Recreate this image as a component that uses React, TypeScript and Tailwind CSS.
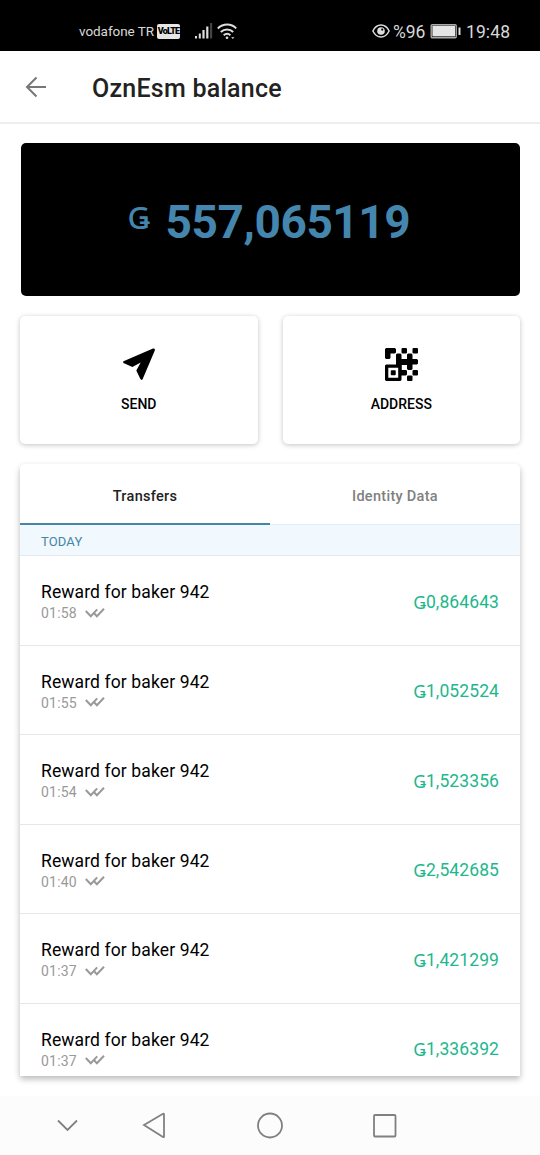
import React from "react";

const rows = [
  ["01:58", "0,864643"],
  ["01:55", "1,052524"],
  ["01:54", "1,523356"],
  ["01:40", "2,542685"],
  ["01:37", "1,421299"],
  ["01:37", "1,336392"],
];

function StatusBar() {
  return (
    <div className="flex h-[51px] shrink-0 items-center bg-black pt-[11px] pr-[29px] pl-[79px] text-[#d8d8d8]">
      <span className="w-[78px] text-[13.5px] leading-5 tracking-[-0.05px] whitespace-nowrap">vodafone TR</span>
      <span className="flex h-[15px] w-[23px] items-center justify-center rounded-[2px] bg-[#e6e6e6] text-[9px] leading-[15px] font-black tracking-[-0.8px] text-black"><span className="mt-px">VoLTE</span></span>
      <svg className="ml-[15px]" width="19" height="17" viewBox="0 0 19 17" fill="#dedede">
        <rect x="0" y="13" width="2" height="2.5" />
        <rect x="3.8" y="10.5" width="2" height="5" />
        <rect x="7.4" y="7" width="2.2" height="8.5" />
        <rect x="11.2" y="3.5" width="2.2" height="12" />
        <rect x="15" y="0" width="2.2" height="15.5" fill="#444" />
      </svg>
      <svg className="ml-[3px]" width="21" height="17" viewBox="0 0 21 17" fill="none" stroke="#dedede" strokeWidth="2">
        <path d="M.8 5.4C6.2.3 14.3.3 19.2 5.4M3.8 9c3.5-3.5 9-3.5 12.4 0M6.7 12.3c2-1.8 4.8-1.8 6.7 0" />
        <circle cx="10" cy="14.7" r="1.3" fill="#dedede" stroke="none" />
        <path d="m14.2 14.2 1.6 1.8 1.6-1.8z" fill="#dedede" stroke="none" />
      </svg>
      <svg className="ml-auto" width="18" height="14" viewBox="0 0 18 14" fill="none" stroke="#dedede" strokeWidth="1.5">
        <path d="M.9 7C4.8-.9 13.2-.9 17.1 7 13.2 14.9 4.8 14.9.9 7Z" />
        <circle cx="9" cy="7" r="3.8" fill="#dedede" stroke="none" />
        <circle cx="10.2" cy="5.6" r="1.1" fill="black" stroke="none" />
      </svg>
      <span className="mt-[2px] ml-[3px] w-[37px] text-[17.5px] leading-5 tracking-[-0.1px]">%96</span>
      <svg width="32" height="16" viewBox="0 0 32 16" fill="none">
        <rect x="1.2" y="1.7" width="25" height="13" rx="1" stroke="#aaaaaa" strokeWidth="1.4" />
        <rect x="2.4" y="2.8" width="22.6" height="10.6" fill="#e5e5e5" />
        <rect x="28.5" y="4.5" width="2" height="7.5" fill="#dedede" />
      </svg>
      <span className="mt-[2px] ml-[4px] w-[45px] text-[17.5px] leading-5 tracking-[0.1px] whitespace-nowrap">19:48</span>
    </div>
  );
}

function QrIcon() {
  return (
    <svg width="33" height="33" viewBox="0 0 12 12" fill="black">
      <path fillRule="evenodd" d="M.4 0H3.6L4 .4V1.6L3.6 2H2V3.6L1.6 4H.4L0 3.6V.4ZM4 2.4 4.4 2H5.6L6 2.4V4H8V2.4L8.4 2H9.6L10 2.4V4H11.6L12 4.4V5.6L11.6 6H10V7.6L9.6 8H8.4L8 7.6V6.2H6.1V8H7.7L8 8.4V9.6L7.6 10H6V11.6L5.6 12H.4L0 11.6V6.4L.4 6H4ZM1.2 7.2V10.8H4.8V7.2Z" />
      <rect x="6" y="0" width="2" height="2" rx=".4" />
      <rect x="10" y="0" width="2" height="2" rx=".4" />
      <rect x="2.1" y="8.1" width="1.8" height="1.8" rx=".3" />
      <rect x="10" y="8" width="2" height="2" rx=".4" />
      <rect x="8" y="10" width="2" height="2" rx=".4" />
    </svg>
  );
}

function DoubleCheck() {
  return (
    <svg className="mb-[2px] ml-[8px]" width="20" height="10" viewBox="0 0 20 10" fill="none" stroke="#999" strokeWidth="2">
      <path d="m.8 3 5 5.2 6.4-6.8M8.6 4.8l3.3 3.4L19 .8" />
    </svg>
  );
}

export default function App() {
  return (
    <div className="flex h-[1155px] w-[540px] flex-col overflow-hidden bg-white font-[Roboto,sans-serif]">
      <StatusBar />
      <header className="flex h-[73px] shrink-0 items-center border-b-2 border-[#eeeeee] bg-white pl-[25px]">
        <svg width="22" height="22" viewBox="0 0 22 22" fill="none" stroke="#777" strokeWidth="2">
          <path d="M21 11H2M11.5 1.5 2 11l9.5 9.5" />
        </svg>
        <h1 className="mt-[4px] ml-[45px] text-[25px] leading-8 font-medium tracking-[0.25px] text-[#222]">OznEsm balance</h1>
      </header>
      <main className="flex min-h-0 flex-1 flex-col px-[20px] pt-[19px]">
        <section className="mr-[0.5px] ml-[0.5px] flex h-[153px] shrink-0 items-center rounded-[5px] bg-black pl-[107px] text-[#4486ad]">
          <span className="mb-[6px] w-[38px] font-['Noto_Sans',sans-serif] text-[31px] leading-8 font-medium">Ǥ</span>
          <span className="mt-[5px] text-[46px] leading-[54px] font-bold tracking-[-0.4px]">557,065119</span>
        </section>
        <div className="mt-[20px] grid h-[128px] shrink-0 grid-cols-2 gap-[25px] text-[14px] font-medium text-black">
          <button className="flex flex-col items-center rounded-[5px] bg-white pt-[31px] shadow-[0_1px_5px_rgba(0,0,0,0.24)]">
            <svg width="34" height="34" viewBox="0 0 34 34">
              <path d="M1.5 14.2 31 1.6Q33.5.8 32.8 3.4L20.7 32Q19.8 33.7 18.4 32.1L14.3 23.6 18.7 15.6 10.4 20 1.5 16Q.6 15 1.5 14.2Z" fill="black" />
            </svg>
            <span className="mt-[13px] leading-5">SEND</span>
          </button>
          <button className="flex flex-col items-center rounded-[5px] bg-white pt-[32px] shadow-[0_1px_5px_rgba(0,0,0,0.24)]">
            <QrIcon />
            <span className="mt-[13px] leading-5">ADDRESS</span>
          </button>
        </div>
        <section className="mt-[20px] flex h-[612px] shrink-0 flex-col overflow-hidden rounded-t-[5px] bg-white shadow-[0_3px_6px_rgba(0,0,0,0.28)]">
          <div className="grid h-[61px] shrink-0 grid-cols-2 text-center text-[14.5px] leading-6 font-medium tracking-[0.3px]">
            <div className="h-[61px] border-b-[2.5px] border-[#4486a5] pt-[20.5px] text-[#222]">Transfers</div>
            <div className="h-[61px] border-b border-[#e5edf1] pt-[20.5px] text-[#808080]">Identity Data</div>
          </div>
          <div className="h-[31px] shrink-0 border-b border-[#e3e9ed] bg-[#f1f8fe] pl-[21px] text-[13px] leading-[33px] tracking-[0.15px] text-[#4486a5]">TODAY</div>
          {rows.map(([time, amount], i) => (
            <div key={i} className="flex h-[89.5px] shrink-0 justify-between border-b border-[#e7e7e7] px-[21px]">
              <div className="pt-[24px]">
                <div className="text-[17.5px] leading-6 tracking-[0.12px] text-black">Reward for baker 942</div>
                <div className="flex items-center text-[14px] leading-[19px] tracking-[0.2px] text-[#999]">
                  {time}
                  <DoubleCheck />
                </div>
              </div>
              <div className="flex pt-[33.5px] text-[17.5px] leading-6 tracking-[0.1px] text-[#1eb78d]">
                <span className="font-['Noto_Sans',sans-serif] text-[17.5px] tracking-[-0.2px]">Ǥ</span>{amount}
              </div>
            </div>
          ))}
        </section>
      </main>
      <nav className="flex h-[59px] shrink-0 items-center bg-[#fcfcfc] pl-[57px]">
        <svg width="340" height="30" viewBox="0 0 340 30" fill="none" stroke="#808080" strokeWidth="1.8">
          <path d="m1 9.5 9.5 9.5L20 9.5M87 14.1 106 2.8Q107 2.5 107 3.5V25.5Q107 26.5 106 26Z" />
          <circle cx="213" cy="14.5" r="12" />
          <rect x="317" y="4" width="21.5" height="21.5" rx="1" />
        </svg>
      </nav>
    </div>
  );
}
